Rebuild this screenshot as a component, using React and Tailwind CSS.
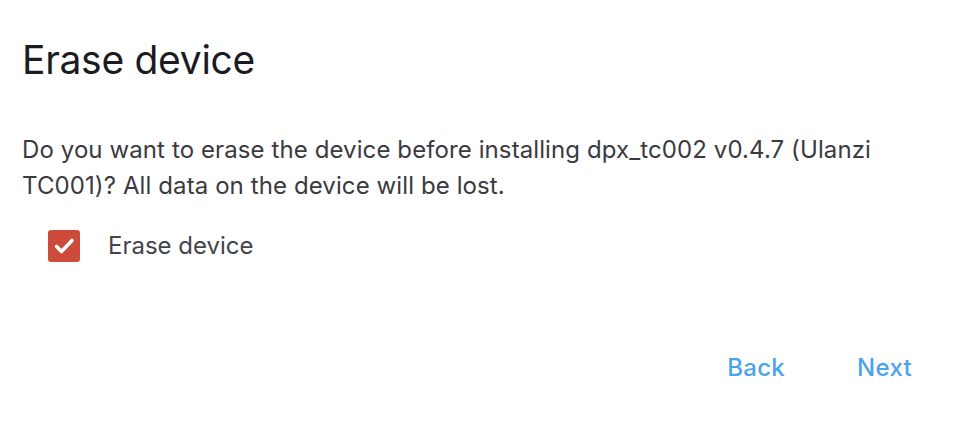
export default function App() {
  return (
    <div className="w-[970px] h-[430px] bg-white font-['Inter','Roboto',sans-serif] flex flex-col px-[22px] pt-[36px]">
      <h1 className="text-[39px] leading-[48px] font-normal text-[#1c1b1f] tracking-[-0.3px]">Erase device</h1>
      <p className="mt-[48px] text-[24px] leading-[36px] text-[#3a3a40] tracking-[0.1px]">
        Do you want to erase the device before installing dpx_tc002 v0.4.7 (Ulanzi
        <br />
        TC001)? All data on the device will be lost.
      </p>
      <label className="mt-[26px] ml-[26px] flex items-center gap-[28px]">
        <span className="w-[32px] h-[32px] rounded-[3px] bg-[#cc4b3b] flex items-center justify-center">
          <svg width="32" height="32" viewBox="0 0 32 32" fill="none" stroke="white" strokeWidth="3.6" strokeLinecap="round" strokeLinejoin="round">
            <path d="M8.5 16.5l5 5L24 10.5" />
          </svg>
        </span>
        <span className="text-[24px] leading-[32px] text-[#44444c]">Erase device</span>
      </label>
      <div className="mt-auto mb-[44px] flex justify-end gap-[72px] pr-[36px]">
        <button className="text-[24px] font-medium text-[#4ba3ec] tracking-[0.3px]">Back</button>
        <button className="text-[24px] font-medium text-[#4ba3ec] tracking-[0.3px]">Next</button>
      </div>
    </div>
  );
}
